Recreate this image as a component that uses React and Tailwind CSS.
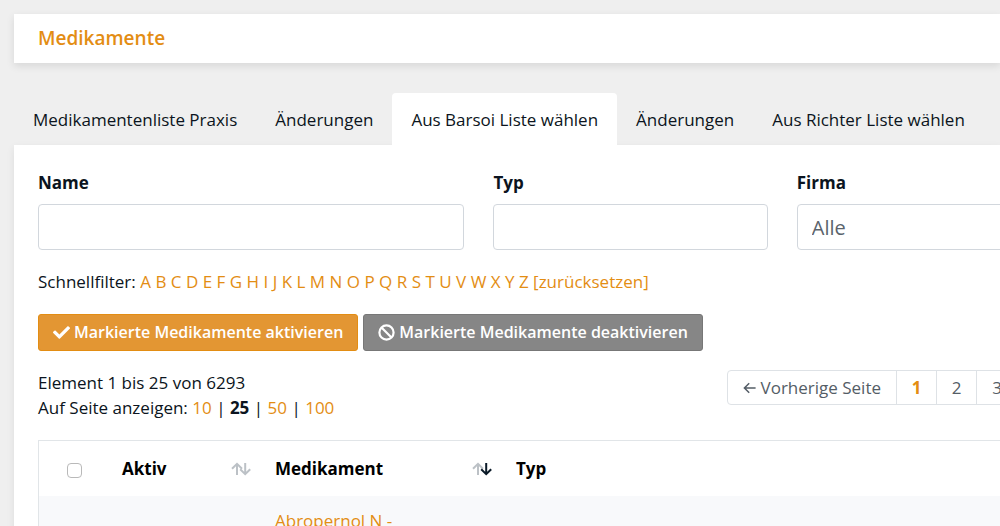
import React from 'react';
import { FaCheck } from 'react-icons/fa';

const tabs = [
  'Medikamentenliste Praxis',
  'Änderungen',
  'Aus Barsoi Liste wählen',
  'Änderungen',
  'Aus Richter Liste wählen',
];
const activeTab = 2;
const letters = 'ABCDEFGHIJKLMNOPQRSTUVWXYZ'.split('');

function BanIcon() {
  return (
    <svg className="size-[17px]" viewBox="0 0 17 17" fill="none" stroke="currentColor" strokeWidth="2.2" aria-hidden="true">
      <circle cx="8.5" cy="8.5" r="7.1" />
      <path d="M3.5 3.5l10 10" />
    </svg>
  );
}

function ArrowLeft() {
  return (
    <svg className="h-3 w-[13px]" viewBox="0 0 13 12" fill="none" stroke="currentColor" strokeWidth="1.5" aria-hidden="true">
      <path d="M12.6 6H1.4M6.2 1.2L1.4 6l4.8 4.8" />
    </svg>
  );
}

function SortIcon({ descending }) {
  return (
    <svg className="h-[14px] w-5" viewBox="0 0 20 14" fill="none" strokeWidth="2" aria-hidden="true">
      <path className="stroke-[#bcc1c6]" d="M6 13V2M1 6.8L6 1.8l5 5" />
      <path className={descending ? 'stroke-[#0b1a28]' : 'stroke-[#bcc1c6]'} d="M14.2 1v11M9.2 7.2l5 5 5-5" />
    </svg>
  );
}

function Field({ id, label, children }) {
  return (
    <div>
      <label htmlFor={id} className="mb-[9px] block font-bold">{label}</label>
      {children}
    </div>
  );
}

const control = 'block h-[46px] w-full appearance-none rounded border border-[#d2d7dd] bg-white px-[14px]';
const link = 'text-[#e38d13]';
const button = 'flex h-[37px] items-center gap-1 rounded-[3px] border px-[14px] text-[16px] font-semibold text-white';

function HeaderCell({ children, descending }) {
  return (
    <th scope="col" className="px-3 text-left font-bold text-black">
      <button type="button" className="flex w-full items-center justify-between">
        {children}
        <SortIcon descending={descending} />
      </button>
    </th>
  );
}

export default function App() {
  return (
    <div className="h-screen overflow-hidden bg-[#efefef] pl-[14px] pt-[14px] font-['Open_Sans','Noto_Sans',sans-serif] text-[17px] leading-[25px] text-[#0b1420]">
      <header className="flex h-[49px] items-center bg-white px-6 shadow-[0_3px_8px_rgba(0,0,0,0.1)]">
        <h1 className="text-[19px] font-semibold text-[#e38d13]">Medikamente</h1>
      </header>

      <nav className="mt-[30px] flex whitespace-nowrap">
        {tabs.map((tab, i) => (
          <a
            key={i}
            href="#"
            className={
              i === activeTab
                ? 'flex h-[52px] items-center rounded-t bg-white px-[19px]'
                : 'flex h-[52px] items-center px-[19px]'
            }
          >
            {tab}
          </a>
        ))}
      </nav>

      <main className="min-h-screen bg-white pl-6 pt-[25px] shadow-[0_3px_8px_rgba(0,0,0,0.08)]">
        <form className="-mr-4 grid grid-cols-[426fr_274fr_219fr] gap-[29px]">
          <Field id="name" label="Name">
            <input id="name" type="text" className={control} />
          </Field>
          <Field id="typ" label="Typ">
            <input id="typ" type="text" className={control} />
          </Field>
          <Field id="firma" label="Firma">
            <select id="firma" className={`${control} text-[20px] text-[#5a636c]`}>
              <option>Alle</option>
            </select>
          </Field>
        </form>

        <p className="mt-[19px] whitespace-nowrap">
          Schnellfilter:{' '}
          {letters.map((l) => (
            <React.Fragment key={l}>
              <a href="#" className={link}>{l}</a>{' '}
            </React.Fragment>
          ))}
          <a href="#" className={link}>[zurücksetzen]</a>
        </p>

        <div className="mt-5 flex gap-[5px] whitespace-nowrap">
          <button type="button" className={`${button} border-[#e38d13] bg-[#e39633]`}>
            <FaCheck className="size-[17px]" aria-hidden="true" />
            Markierte Medikamente aktivieren
          </button>
          <button type="button" className={`${button} border-[#777777] bg-[#868686]`}>
            <BanIcon />
            Markierte Medikamente deaktivieren
          </button>
        </div>

        <div className="-mr-[18px] mt-[19px] flex items-start justify-between whitespace-nowrap">
          <div>
            <p>Element 1 bis 25 von 6293</p>
            <p>
              Auf Seite anzeigen: <a href="#" className={link}>10</a> | <strong>25</strong> |{' '}
              <a href="#" className={link}>50</a> | <a href="#" className={link}>100</a>
            </p>
          </div>
          <nav className="flex h-[35px] divide-x divide-[#dee2e6] rounded border border-[#dee2e6] text-[#545d66]">
            <a href="#" className="flex items-center gap-[5px] px-[15px]">
              <ArrowLeft />
              Vorherige Seite
            </a>
            <a href="#" aria-current="page" className="flex w-10 items-center justify-center font-bold text-[#e38d13]">1</a>
            <a href="#" className="flex w-10 items-center justify-center">2</a>
            <a href="#" className="flex w-10 items-center justify-center">3</a>
          </nav>
        </div>

        <div className="-mr-4 mt-5 border border-[#e1e5e8]">
          <table className="w-full table-fixed">
            <colgroup>
              <col className="w-[71px]" />
              <col className="w-[153px]" />
              <col className="w-[241px]" />
              <col />
            </colgroup>
            <thead>
              <tr className="h-[55px]">
                <th scope="col">
                  <input
                    type="checkbox"
                    aria-label="Alle auswählen"
                    className="mx-auto mt-[3px] block size-[15px] appearance-none rounded-[4px] border border-[#b9b9b9] bg-white"
                  />
                </th>
                <HeaderCell>Aktiv</HeaderCell>
                <HeaderCell descending>Medikament</HeaderCell>
                <th scope="col" className="px-3 text-left font-bold text-black">Typ</th>
              </tr>
            </thead>
            <tbody>
              <tr className="h-20 bg-[#f8f9fb] align-top">
                <td />
                <td />
                <td className="px-3 pt-3"><a href="#" className={link}>Abropernol N -</a></td>
                <td />
              </tr>
            </tbody>
          </table>
        </div>
      </main>
    </div>
  );
}
